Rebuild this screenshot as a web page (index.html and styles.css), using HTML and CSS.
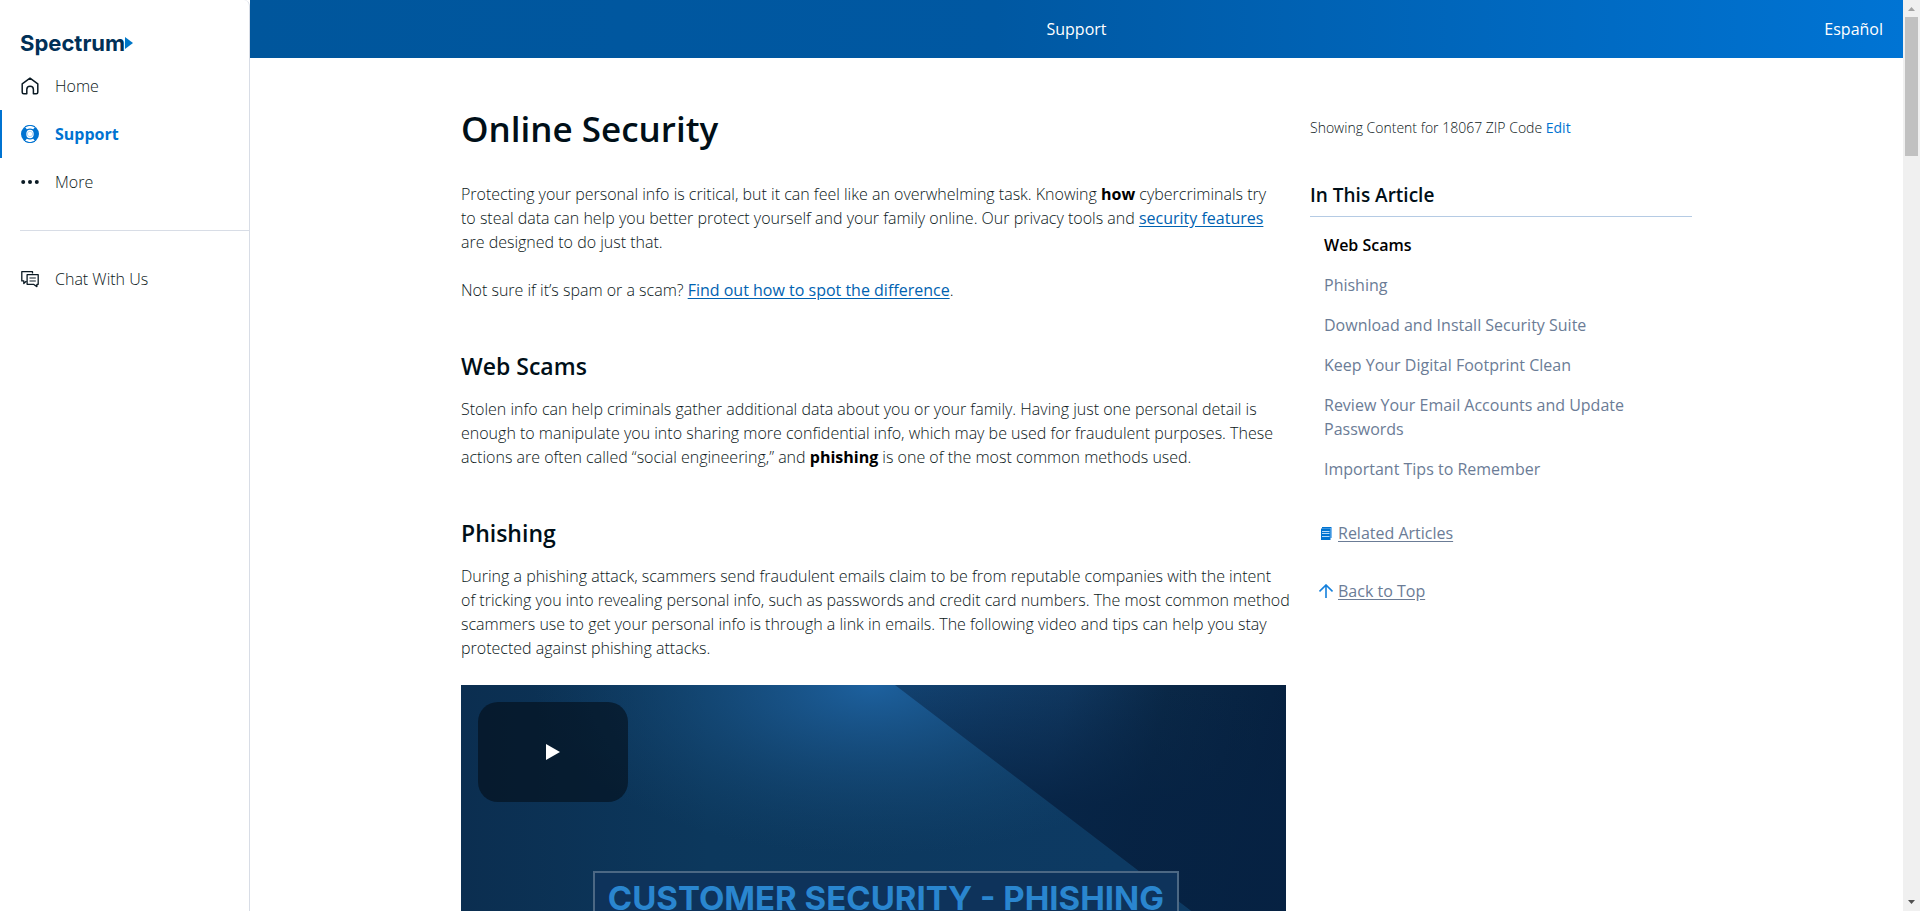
FILE: index.html
```html
<!DOCTYPE html>
<html lang="en">
<head>
<meta charset="utf-8">
<title>Online Security | Spectrum Support</title>
<link rel="stylesheet" href="styles.css">
</head>
<body>
<div class="app">
  <nav class="sidebar" aria-label="Main">
    <a class="logo" href="#" aria-label="Spectrum">Spectrum<svg class="logo-arrow" width="8" height="12" viewBox="0 0 8 12" aria-hidden="true"><path d="M0 0 8 6 0 12z" fill="#0077c8"/></svg></a>
    <ul class="nav-list">
      <li><a class="nav-item" href="#">
        <svg class="icon" width="18" height="18" viewBox="0 0 18 18" fill="none" stroke="#0b1a24" stroke-width="1.5" stroke-linejoin="round" aria-hidden="true"><path d="M1.2 6.9 9 1.2l7.8 5.7v8.4q0 1.5-1.5 1.5h-2.9v-4.4q0-3.1-3.3-3.1t-3.3 3.1v4.4H2.700q-1.500 0-1.500-1.500z"/></svg>
        Home</a></li>
      <li><a class="nav-item active" href="#" aria-current="page">
        <svg class="icon" width="18" height="18" viewBox="0 0 18 18" aria-hidden="true"><circle cx="9" cy="9" r="9" fill="#0073d1"/><path d="M4.200 1.900Q9-.2 13.800 1.900L12.300 4.200Q9 3 5.700 4.200zM4.200 16.100Q9 18.200 13.800 16.100L12.300 13.800Q9 15 5.700 13.800z" fill="#fff"/><path d="M3.900 1.600Q9-1.100 14.100 1.600M3.900 16.400Q9 19.100 14.100 16.400" fill="none" stroke="#0073d1" stroke-width="1"/><ellipse cx="9" cy="9" rx="3.700" ry="4.300" fill="#fff"/><circle cx="9" cy="9" r="2.700" fill="none" stroke="#9fcbf0" stroke-width=".8"/></svg>
        Support</a></li>
      <li><a class="nav-item" href="#">
        <svg class="icon" width="18" height="18" viewBox="0 0 18 18" fill="#0b1a24" aria-hidden="true"><circle cx="2.200" cy="9" r="2"/><circle cx="9" cy="9" r="2"/><circle cx="15.800" cy="9" r="2"/></svg>
        More</a></li>
    </ul>
    <ul class="nav-list nav-second">
      <li><a class="nav-item" href="#">
        <svg class="icon" width="18" height="18" viewBox="0 0 18 18" fill="none" stroke="#0b1a24" stroke-width="1.300" stroke-linejoin="round" aria-hidden="true"><path d="M11.500 3.500V1.700H.8v9.200h2v2.600l2.400-2.200M6.100 4.700h11.100v9.600h-1.300v2.300l-3.400-2.300H6.100z"/><path d="M8.500 8h6.300M8.500 11h6.300" stroke-width="1.200"/></svg>
        Chat With Us</a></li>
    </ul>
  </nav>

  <div class="main">
    <header class="topbar">
      <span></span>
      <span class="topbar-title">Support</span>
      <a class="lang" href="#" lang="es">Español</a>
    </header>
    <div class="page">
      <article class="article">
        <h1>Online Security</h1>
        <p>Protecting your personal info is critical, but it can feel like an overwhelming task. Knowing <strong>how</strong> cybercriminals try<br>to steal data can help you better protect yourself and your family online. Our privacy tools and <a href="#">security features</a><br>are designed to do just that.</p>
        <p>Not sure if it’s spam or a scam? <a href="#">Find out how to spot the difference</a>.</p>
        <h2>Web Scams</h2>
        <p>Stolen info can help criminals gather additional data about you or your family. Having just one personal detail is<br>enough to manipulate you into sharing more confidential info, which may be used for fraudulent purposes. These<br>actions are often called “social engineering,” and <strong>phishing</strong> is one of the most common methods used.</p>
        <h2>Phishing</h2>
        <p>During a phishing attack, scammers send fraudulent emails claim to be from reputable companies with the intent<br>of tricking you into revealing personal info, such as passwords and credit card numbers. The most common method<br>scammers use to get your personal info is through a link in emails. The following video and tips can help you stay<br>protected against phishing attacks.</p>
        <div class="video">
          <svg class="poster" viewBox="0 0 825 464" preserveAspectRatio="none" aria-hidden="true">
            <defs>
              <linearGradient id="base" x1="0" y1="0" x2="1" y2="0"><stop offset="0" stop-color="#0b2e50"/><stop offset=".3" stop-color="#0c385d"/><stop offset=".8" stop-color="#0d3a63"/></linearGradient>
              <radialGradient id="glow" gradientUnits="userSpaceOnUse" cx="0" cy="0" r="1" gradientTransform="translate(412 0) scale(340 170)"><stop offset="0" stop-color="#1d619f"/><stop offset=".35" stop-color="#1a568c" stop-opacity=".7"/><stop offset="1" stop-color="#15466f" stop-opacity="0"/></radialGradient>
              <linearGradient id="shade" gradientUnits="userSpaceOnUse" x1="450" y1="0" x2="825" y2="90"><stop offset="0" stop-color="#12416f"/><stop offset=".4" stop-color="#10375f"/><stop offset=".65" stop-color="#0a2847"/><stop offset="1" stop-color="#06203f"/></linearGradient>
              <linearGradient id="fall" x1="0" y1="0" x2="0" y2="1"><stop offset="0" stop-color="#062243" stop-opacity="0"/><stop offset=".4" stop-color="#062243" stop-opacity=".85"/></linearGradient>
            </defs>
            <path fill="url(#base)" d="M0 0h825v464H0z"/>
            <path fill="url(#glow)" d="M0 0h825v464H0z"/>
            <path fill="url(#shade)" d="M434 0h391v298z"/>
            <path fill="url(#fall)" d="M434 0h391v298z"/>
          </svg>
          <div class="video-title">CUSTOMER SECURITY - PHISHING</div>
          <button class="play" type="button" aria-label="Play video"><svg width="14" height="16" viewBox="0 0 14 16" aria-hidden="true"><path d="M0 0 14 8 0 16z" fill="#fff"/></svg></button>
        </div>
      </article>

      <aside class="aside">
        <p class="zip">Showing Content for 18067 ZIP Code <a href="#">Edit</a></p>
        <h3>In This Article</h3>
        <ul class="toc">
          <li><a class="current" href="#">Web Scams</a></li>
          <li><a href="#">Phishing</a></li>
          <li><a href="#">Download and Install Security Suite</a></li>
          <li><a href="#">Keep Your Digital Footprint Clean</a></li>
          <li><a href="#">Review Your Email Accounts and Update Passwords</a></li>
          <li><a href="#">Important Tips to Remember</a></li>
        </ul>
        <div class="jump">
          <svg width="14" height="14" viewBox="0 0 14 14" aria-hidden="true"><path d="M3 1h10v11H3z" fill="#7db9ee"/><path d="M3 1.500h9" stroke="#0073d1"/><path d="M2 2.500h9.500V14H2z" fill="#0073d1"/><path d="M3 5.500h7.500M3 7.500h7.500M3 10.500h7.500" stroke="#b5d9f8"/></svg>
          <a href="#">Related Articles</a>
        </div>
        <div class="jump">
          <svg width="14" height="14" viewBox="0 0 14 14" fill="none" stroke="#1480dc" stroke-width="1.600" aria-hidden="true"><path d="M7 14V1M.5 7.500 7 1l6.500 6.500"/></svg>
          <a href="#">Back to Top</a>
        </div>
      </aside>
    </div>
  </div>

  <div class="scrollbar" aria-hidden="true">
    <svg width="17" height="17" viewBox="0 0 17 17"><path d="M5 11h7L8.500 7z" fill="#a3a3a3"/></svg>
    <div class="thumb"></div>
    <svg class="down" width="17" height="17" viewBox="0 0 17 17"><path d="M5 6h7L8.500 10z" fill="#505050"/></svg>
  </div>
</div>
</body>
</html>
```
FILE: styles.css
```css
* { box-sizing: border-box; }

body {
  margin: 0;
  background: #fff;
  color: #0b1720;
  font: 300 16px/24px "Open Sans", "Noto Sans", sans-serif;
}

h1, h2, h3, p, ul { margin: 0; padding: 0; }
ul { list-style: none; }
a { color: #0062b1; }

.app { display: flex; height: 100vh; overflow: hidden; }

/* Sidebar */
.sidebar {
  flex: 0 0 250px;
  border-right: 1px solid #d8dde6;
  border-top-right-radius: 6px;
  padding-top: 24px;
}
.logo {
  display: flex;
  align-items: center;
  height: 38px;
  padding-left: 20px;
  color: #003057;
  font: 700 22px/38px Inter, sans-serif;
  text-decoration: none;
}
.nav-item {
  display: flex;
  align-items: center;
  gap: 16px;
  height: 48px;
  padding-left: 21px;
  color: #0b1720;
  text-decoration: none;
}
.nav-item.active {
  padding-left: 19px;
  border-left: 2px solid #0073d1;
  color: #0073d1;
  font-weight: 700;
}
.nav-second {
  margin: 24px 0 0 20px;
  padding-top: 24px;
  border-top: 1px solid #d8dde6;
}
.nav-second .nav-item { padding-left: 1px; }

/* Main column */
.main { flex: 1; min-width: 0; }
.topbar {
  display: grid;
  grid-template-columns: 1fr auto 1fr;
  align-items: center;
  height: 58px;
  padding: 0 20px;
  background: linear-gradient(90deg, #00569c 0%, #0058a2 45%, #0074d4 100%);
  color: #fff;
}
.topbar-title { font-weight: 400; }
.lang {
  justify-self: end;
  color: #fff;
  font-weight: 500;
  text-decoration: none;
}
.page {
  display: grid;
  grid-template-columns: minmax(0, 1fr) 382px;
  gap: 24px;
  max-width: 1231px;
  margin: 0 auto;
  padding-top: 48px;
}

/* Article */
.article { white-space: nowrap; }
h1, h2, h3 { color: #000f18; font-weight: 600; }
h1 { margin-bottom: 30px; font-size: 35px; line-height: 46px; }
h2 { margin: 48px 0 15px; font-size: 23px; line-height: 32px; }
.article p + p { margin-top: 24px; }
.article p a { font-weight: 400; text-underline-offset: 2px; }
strong { color: #000; font-weight: 700; }

.video {
  position: relative;
  margin-top: 25px;
  aspect-ratio: 16 / 9;
  overflow: hidden;
  background: #0c385d;
}
.poster { display: block; width: 100%; height: 100%; }
.video-title {
  position: absolute;
  top: 40%;
  left: 16%;
  width: 71%;
  height: 120px;
  border: 2px solid #4c6884;
  background: #0e335b;
  color: #2a86cf;
  font: 700 33px/50px Inter, sans-serif;
  text-align: center;
}
.play {
  position: absolute;
  top: 17px;
  left: 17px;
  display: flex;
  align-items: center;
  justify-content: center;
  width: 150px;
  height: 100px;
  border: 0;
  border-radius: 20px;
  background: rgba(3, 13, 24, .6);
}

/* Article navigation */
.zip { margin-top: 10px; font-size: 14px; }
.zip a { color: #0073d1; font-weight: 400; text-decoration: none; }
.aside h3 {
  margin-top: 41px;
  padding-bottom: 7px;
  border-bottom: 1px solid #b5cbe4;
  font-size: 19px;
  line-height: 28px;
}
.toc {
  display: grid;
  gap: 16px;
  margin: 16px 40px 40px 14px;
}
.toc a { color: #6b7c96; font-weight: 400; text-decoration: none; }
.toc .current { color: #000; font-weight: 600; }
.jump { display: flex; align-items: center; gap: 5px; margin: 0 0 34px 9px; }
.jump a { color: #6b7c96; font-weight: 400; text-underline-offset: 2px; }

/* Scrollbar */
.scrollbar {
  display: flex;
  flex: 0 0 17px;
  flex-direction: column;
  background: #f0f0f0;
}
.thumb { height: 139px; margin: 0 2px; background: #c1c1c1; }
.down { margin-top: auto; }
```
